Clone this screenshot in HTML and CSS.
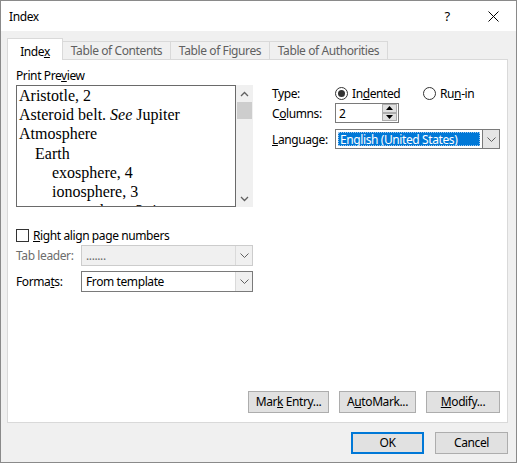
FILE: index.html
```html
<!DOCTYPE html>
<html>
<head>
<meta charset="utf-8">
<link rel="stylesheet" href="styles.css">
</head>
<body>
<div class="window">
  <div class="titlebar">
    <span class="title">Index</span>
    <span class="cap help">?</span>
    <span class="cap close"><svg width="11" height="11" viewBox="0 0 11 11"><path d="M0.5 0.5L10.5 10.5M10.5 0.5L0.5 10.5" stroke="#000" stroke-width="1" fill="none"/></svg></span>
  </div>
  <div class="body">
    <div class="tabs">
      <div class="tab active t-index">Inde<u>x</u></div>
      <div class="tab t-toc">Table of Contents</div>
      <div class="tab t-tof">Table of Figures</div>
      <div class="tab t-toa">Table of Authorities</div>
    </div>
    <div class="panel">
      <div class="cols">
        <div class="left">
          <div class="pp-label">Print Pre<u>v</u>iew</div>
          <div class="preview-wrap">
            <div class="preview">
              <div class="l0">Aristotle, 2</div>
              <div class="l0">Asteroid belt. <i>See</i> Jupiter</div>
              <div class="l0">Atmosphere</div>
              <div class="l1">Earth</div>
              <div class="l2">exosphere, 4</div>
              <div class="l2">ionosphere, 3</div>
              <div class="l2">mesosphere, 3-4</div>
            </div>
            <div class="scroll">
              <div class="sarrow"><svg width="9" height="6" viewBox="0 0 9 6"><path d="M1 5L4.5 1.5L8 5" stroke="#606060" stroke-width="1.3" fill="none"/></svg></div>
              <div class="thumb"></div>
              <div class="sarrow bottom"><svg width="9" height="6" viewBox="0 0 9 6"><path d="M1 1L4.5 4.5L8 1" stroke="#606060" stroke-width="1.3" fill="none"/></svg></div>
            </div>
          </div>
          <div class="check-row">
            <span class="checkbox"></span>
            <span><u>R</u>ight align page numbers</span>
          </div>
          <div class="field-row leader">
            <span class="flabel disabled">Tab leader:</span>
            <div class="combo disabled-combo">
              <span class="cval">.......</span>
              <span class="cbtn"><svg width="9" height="5" viewBox="0 0 9 5"><path d="M0.5 0.5L4.5 4.5L8.5 0.5" stroke="#606060" stroke-width="1" fill="none"/></svg></span>
            </div>
          </div>
          <div class="field-row formats">
            <span class="flabel">Forma<u>t</u>s:</span>
            <div class="combo">
              <span class="cval">From template</span>
              <span class="cbtn"><svg width="9" height="5" viewBox="0 0 9 5"><path d="M0.5 0.5L4.5 4.5L8.5 0.5" stroke="#606060" stroke-width="1" fill="none"/></svg></span>
            </div>
          </div>
        </div>
        <div class="right">
          <div class="rrow type-row">
            <span class="rlabel">Type:</span>
            <span class="radio-opt first"><span class="radio on"></span><span>In<u>d</u>ented</span></span>
            <span class="radio-opt"><span class="radio"></span><span>Ru<u>n</u>-in</span></span>
          </div>
          <div class="rrow col-row">
            <span class="rlabel">C<u>o</u>lumns:</span>
            <div class="spin">
              <span class="sval">2</span>
              <div class="sbtns">
                <span class="sbtn"><svg width="7" height="4" viewBox="0 0 7 4"><path d="M0 4L3.5 0L7 4Z" fill="#000"/></svg></span>
                <span class="sbtn"><svg width="7" height="4" viewBox="0 0 7 4"><path d="M0 0L3.5 4L7 0Z" fill="#000"/></svg></span>
              </div>
            </div>
          </div>
          <div class="rrow lang-row">
            <span class="rlabel"><u>L</u>anguage:</span>
            <div class="combo lang">
              <span class="cval"><span class="sel">English (United States)</span></span>
              <span class="cbtn"><svg width="9" height="5" viewBox="0 0 9 5"><path d="M0.5 0.5L4.5 4.5L8.5 0.5" stroke="#606060" stroke-width="1" fill="none"/></svg></span>
            </div>
          </div>
        </div>
      </div>
      <div class="panel-buttons">
        <button class="btn b-mark">Mar<u>k</u> Entry...</button>
        <button class="btn b-auto">A<u>u</u>toMark...</button>
        <button class="btn b-mod"><u>M</u>odify...</button>
      </div>
    </div>
    <div class="footer">
      <button class="btn b-ok default">OK</button>
      <button class="btn b-cancel">Cancel</button>
    </div>
  </div>
</div>
</body>
</html>
```
FILE: styles.css
```css
* { box-sizing: border-box; }
html, body { margin: 0; padding: 0; }
body {
  font-family: "Noto Sans", "Liberation Sans", sans-serif;
  font-size: 12px;
  letter-spacing: -0.4px;
  color: #000;
  background: #fff;
}
u { text-decoration: underline; text-underline-offset: 1px; }
.window {
  width: 517px;
  height: 463px;
  border: 1px solid #8a8a8a;
  background: #f0f0f0;
  display: flex;
  flex-direction: column;
}
.titlebar {
  height: 30px;
  background: #fff;
  display: flex;
  align-items: center;
}
.title { padding-left: 8px; font-size: 12px; }
.cap {
  width: 46px;
  height: 30px;
  display: flex;
  align-items: center;
  justify-content: center;
}
.help { margin-left: auto; font-size: 13px; }
.body {
  flex: 1;
  padding: 7px 8px 0 6px;
  display: flex;
  flex-direction: column;
}
.tabs {
  height: 21px;
  display: flex;
  align-items: flex-end;
}
.tab {
  height: 18px;
  border: 1px solid #d9d9d9;
  border-bottom: none;
  background: #f0f0f0;
  color: #606060;
  text-align: center;
  padding-top: 1px;
  line-height: 15px;
  margin-left: -1px;
}
.tab.active {
  height: 22px;
  margin-bottom: -1px;
  margin-left: 0;
  background: #fff;
  color: #000;
  padding-top: 5px;
  position: relative;
  z-index: 1;
}
.t-index { width: 56px; }
.t-toc { width: 109px; }
.t-tof { width: 100px; }
.t-toa { width: 119px; }
.panel {
  height: 364px;
  background: #fff;
  border: 1px solid #d9d9d9;
  padding: 8px 7px 9px 8px;
  display: flex;
  flex-direction: column;
}
.cols {
  display: grid;
  grid-template-columns: 237px 1fr;
  column-gap: 19px;
}
.left { display: flex; flex-direction: column; }
.pp-label { line-height: 15px; margin-bottom: 2px; }
.preview-wrap { display: flex; height: 122px; }
.preview {
  width: 220px;
  border: 1px solid #6a6a6a;
  overflow: hidden;
  font-family: "Liberation Serif", serif;
  font-size: 16px;
  letter-spacing: 0;
  line-height: 19.2px;
  padding-left: 2px;
  white-space: nowrap;
}
.l1 { padding-left: 16px; }
.l2 { padding-left: 33px; }
.scroll {
  width: 17px;
  background: #f0f0f0;
  display: flex;
  flex-direction: column;
}
.sarrow {
  height: 17px;
  display: flex;
  align-items: center;
  justify-content: center;
}
.sarrow.bottom { margin-top: auto; }
.thumb {
  height: 17px;
  margin: 0 1px;
  background: #cdcdcd;
}
.check-row {
  margin-top: 22px;
  height: 13px;
  display: flex;
  align-items: center;
  gap: 4px;
  line-height: 15px;
}
.checkbox {
  width: 13px;
  height: 13px;
  border: 1px solid #333;
  background: #fff;
}
.field-row {
  height: 21px;
  display: flex;
  align-items: center;
}
.leader { margin-top: 3px; }
.formats { margin-top: 5px; height: 21px; }
.flabel { width: 65px; }
.disabled { color: #6d6d6d; }
.combo {
  width: 172px;
  height: 100%;
  border: 1px solid #7a7a7a;
  background: #fff;
  display: flex;
  align-items: stretch;
}
.disabled-combo { border-color: #cccccc; background: #f0f0f0; color: #6d6d6d; }
.cval {
  flex: 1;
  display: flex;
  align-items: center;
  padding-left: 4px;
}
.cbtn {
  width: 17px;
  display: flex;
  align-items: center;
  justify-content: center;
  background: #f0f0f0;
  border-left: 1px solid #dadada;
}
.right { display: flex; flex-direction: column; }
.rrow { display: flex; align-items: center; }
.rlabel { width: 63px; }
.type-row { margin-top: 18px; height: 15px; }
.radio-opt { display: flex; align-items: center; gap: 4px; }
.radio-opt.first { width: 88px; }
.radio {
  width: 13px;
  height: 13px;
  border: 1px solid #333;
  border-radius: 50%;
  background: #fff;
  display: flex;
  align-items: center;
  justify-content: center;
}
.radio.on::after {
  content: "";
  width: 7px;
  height: 7px;
  border-radius: 50%;
  background: #333;
}
.col-row { margin-top: 2px; height: 20px; }
.spin {
  width: 64px;
  height: 20px;
  border: 1px solid #7a7a7a;
  display: flex;
  background: #fff;
}
.sval { flex: 1; padding-left: 3px; display: flex; align-items: center; }
.sbtns {
  width: 16px;
  display: flex;
  flex-direction: column;
  padding: 0 1px 1px 0;
}
.sbtn {
  flex: 1;
  background: #e1e1e1;
  border: 1px solid #adadad;
  display: flex;
  align-items: center;
  justify-content: center;
}
.lang-row { margin-top: 6px; height: 20px; }
.combo.lang { width: 165px; height: 20px; }
.combo.lang .cval { padding: 2px; }
.sel {
  display: flex;
  align-items: center;
  width: 100%;
  height: 100%;
  background: #0078d7;
  color: #fff;
  padding-left: 2px;
  outline: 1px dotted #9cc6ee;
  outline-offset: -1px;
}
.combo.lang .cbtn { background: #e5e5e5; border-left: 1px solid #7a7a7a; }
.panel-buttons {
  margin-top: auto;
  display: flex;
  justify-content: flex-end;
  gap: 10px;
}
.btn {
  height: 22px;
  font-family: "Noto Sans", "Liberation Sans", sans-serif;
  font-size: 12px;
  letter-spacing: -0.4px;
  color: #000;
  background: #e1e1e1;
  border: 1px solid #adadad;
  padding: 0;
  line-height: 18px;
}
.b-mark { width: 81px; }
.b-auto { width: 77px; }
.b-mod { width: 74px; }
.footer {
  padding-top: 9px;
  display: flex;
  justify-content: flex-end;
  gap: 11px;
}
.b-ok, .b-cancel { width: 73px; }
.btn.default { border: 2px solid #0078d7; }
```
